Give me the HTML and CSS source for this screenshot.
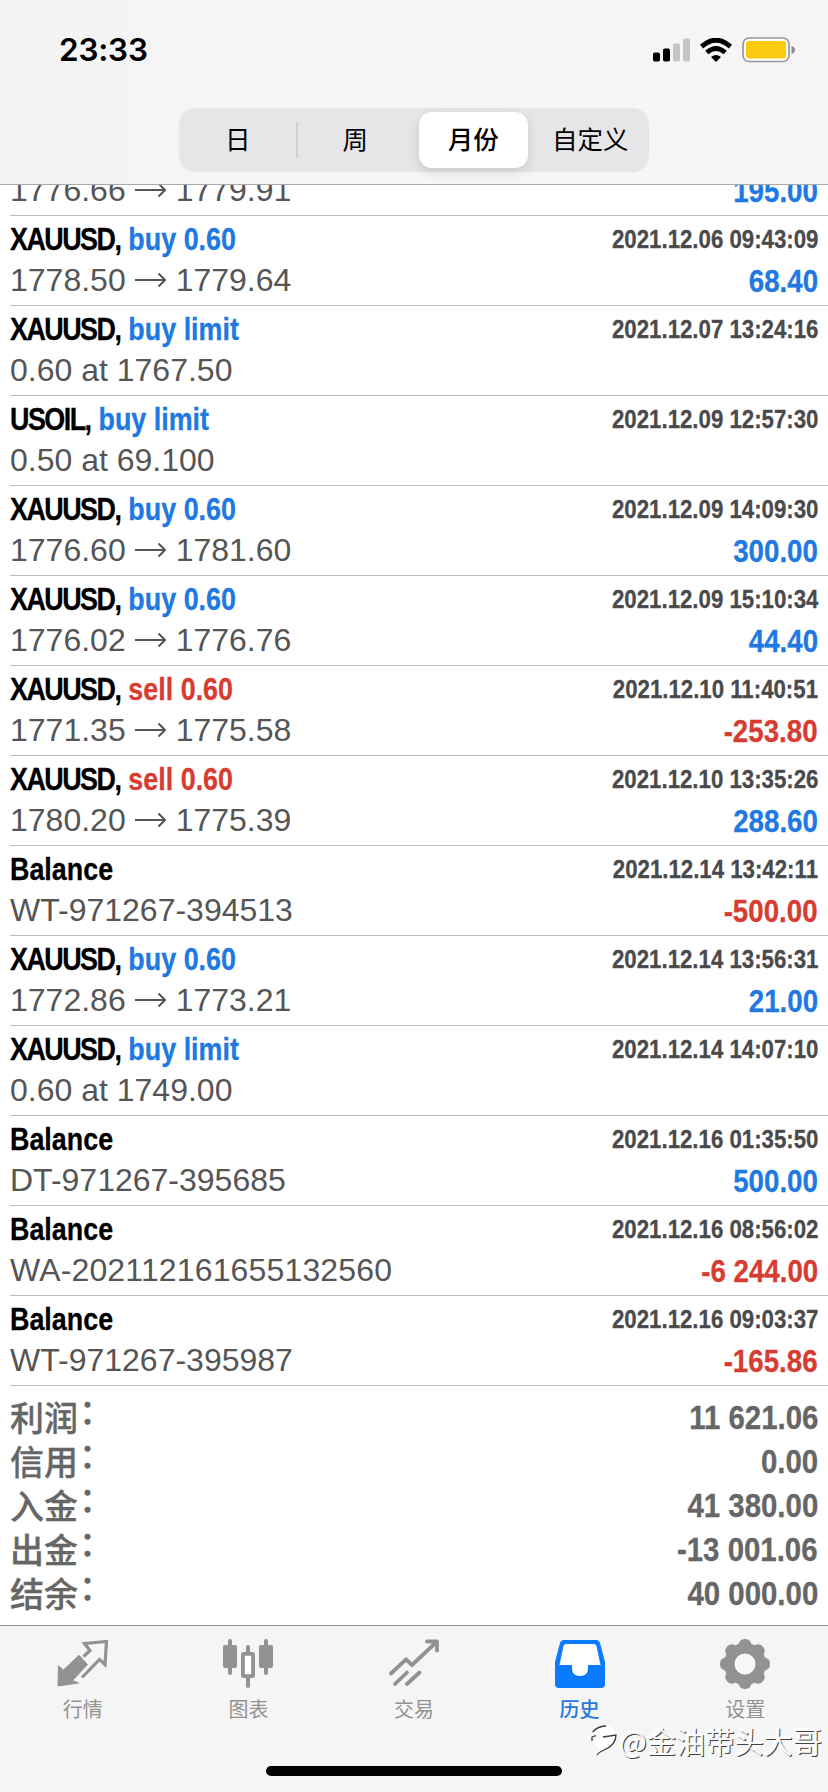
FILE: index.html
```html
<!DOCTYPE html>
<html lang="zh-CN">
<head>
<meta charset="utf-8">
<title>历史</title>
<link rel="stylesheet" href="styles.css">
</head>
<body>
<svg class="defs" width="0" height="0">
  <symbol id="arrow" viewBox="0 0 31 16"><path d="M0 8H30M23.500 1.500L30 8L23.500 14.500" fill="none" stroke="currentColor" stroke-width="2"/></symbol>
</svg>
<div class="screen">
  <header class="header">
    <div class="status">
      <span class="time">23:33</span>
      <div class="indicators">
        <svg class="signal" width="37" height="24" viewBox="0 0 37 24"><rect x="0" y="14.500" width="7" height="9" rx="1.800"/><rect x="10" y="10.500" width="7" height="13" rx="1.800"/><rect x="20" y="5.500" width="7" height="18" rx="1.800" fill="#c4c4c5"/><rect x="30" y="0.500" width="7" height="23" rx="1.800" fill="#c4c4c5"/></svg>
        <svg class="wifi" width="32" height="24" viewBox="0 0 32 24"><g fill="none" stroke="#000" stroke-width="4.800"><path d="M1.600 8.600Q16 -4.200 30.400 8.600"/><path d="M6.800 14.600Q16 6.200 25.200 14.600"/></g><path d="M11 19Q16 15 21 19L16 24Z"/></svg>
        <svg class="battery" width="53" height="26" viewBox="0 0 53 26"><rect x="1" y="1" width="46" height="23.500" rx="6" fill="#fffdf4" stroke="#98989b" stroke-width="1.700"/><rect x="4" y="4" width="40" height="17.500" rx="3" fill="#fbcb12"/><path d="M49.500 8.800Q53 10 53 13T49.500 17Z" fill="#8e8e93"/></svg>
      </div>
    </div>
    <div class="segments">
      <span class="segment">日</span>
      <span class="segment divided">周</span>
      <span class="segment selected">月份</span>
      <span class="segment">自定义</span>
    </div>
  </header>

  <main class="history">
    <div class="deal"><div class="line"></div><div class="line"><span>1776.66<svg class="arrow"><use href="#arrow"/></svg>1779.91</span><strong>195.00</strong></div></div>
    <div class="deal"><div class="line"><b><u>XAUUSD, </u><i>buy 0.60</i></b><time>2021.12.06 09:43:09</time></div><div class="line"><span>1778.50<svg class="arrow"><use href="#arrow"/></svg>1779.64</span><strong>68.40</strong></div></div>
    <div class="deal"><div class="line"><b><u>XAUUSD, </u><i>buy limit</i></b><time>2021.12.07 13:24:16</time></div><div class="line"><span>0.60 at 1767.50</span></div></div>
    <div class="deal"><div class="line"><b><u>USOIL, </u><i>buy limit</i></b><time>2021.12.09 12:57:30</time></div><div class="line"><span>0.50 at 69.100</span></div></div>
    <div class="deal"><div class="line"><b><u>XAUUSD, </u><i>buy 0.60</i></b><time>2021.12.09 14:09:30</time></div><div class="line"><span>1776.60<svg class="arrow"><use href="#arrow"/></svg>1781.60</span><strong>300.00</strong></div></div>
    <div class="deal"><div class="line"><b><u>XAUUSD, </u><i>buy 0.60</i></b><time>2021.12.09 15:10:34</time></div><div class="line"><span>1776.02<svg class="arrow"><use href="#arrow"/></svg>1776.76</span><strong>44.40</strong></div></div>
    <div class="deal"><div class="line"><b><u>XAUUSD, </u><i class="red">sell 0.60</i></b><time>2021.12.10 11:40:51</time></div><div class="line"><span>1771.35<svg class="arrow"><use href="#arrow"/></svg>1775.58</span><strong class="red">-253.80</strong></div></div>
    <div class="deal"><div class="line"><b><u>XAUUSD, </u><i class="red">sell 0.60</i></b><time>2021.12.10 13:35:26</time></div><div class="line"><span>1780.20<svg class="arrow"><use href="#arrow"/></svg>1775.39</span><strong>288.60</strong></div></div>
    <div class="deal"><div class="line"><b>Balance</b><time>2021.12.14 13:42:11</time></div><div class="line"><span>WT-971267-394513</span><strong class="red">-500.00</strong></div></div>
    <div class="deal"><div class="line"><b><u>XAUUSD, </u><i>buy 0.60</i></b><time>2021.12.14 13:56:31</time></div><div class="line"><span>1772.86<svg class="arrow"><use href="#arrow"/></svg>1773.21</span><strong>21.00</strong></div></div>
    <div class="deal"><div class="line"><b><u>XAUUSD, </u><i>buy limit</i></b><time>2021.12.14 14:07:10</time></div><div class="line"><span>0.60 at 1749.00</span></div></div>
    <div class="deal"><div class="line"><b>Balance</b><time>2021.12.16 01:35:50</time></div><div class="line"><span>DT-971267-395685</span><strong>500.00</strong></div></div>
    <div class="deal"><div class="line"><b>Balance</b><time>2021.12.16 08:56:02</time></div><div class="line"><span class="long">WA-202112161655132560</span><strong class="red">-6 244.00</strong></div></div>
    <div class="deal"><div class="line"><b>Balance</b><time>2021.12.16 09:03:37</time></div><div class="line"><span>WT-971267-395987</span><strong class="red">-165.86</strong></div></div>
    <dl class="summary">
      <div class="total"><dt>利润<span>：</span></dt><dd>11 621.06</dd></div>
      <div class="total"><dt>信用<span>：</span></dt><dd>0.00</dd></div>
      <div class="total"><dt>入金<span>：</span></dt><dd>41 380.00</dd></div>
      <div class="total"><dt>出金<span>：</span></dt><dd>-13 001.06</dd></div>
      <div class="total"><dt>结余<span>：</span></dt><dd>40 000.00</dd></div>
    </dl>
  </main>

  <footer class="footer">
    <nav class="tabs">
      <div class="tab">
        <svg width="52" height="52" viewBox="0 0 52 52"><path d="M1.500 29L6.500 33L22 18.200L30.500 27.500L15.500 43.500L21.500 46L1 49Z" fill="currentColor" stroke="currentColor" stroke-linejoin="round"/><path d="M26.500 19.500L33 13.500L27.500 6.500L49.500 4.500L48 27.500L42.500 22.500L25 40.500" fill="none" stroke="currentColor" stroke-width="3.200"/></svg>
        <span>行情</span>
      </div>
      <div class="tab">
        <svg width="52" height="52" viewBox="0 0 52 52"><g fill="currentColor"><rect x="1" y="8" width="14" height="23" rx="2"/><rect x="6" y="2" width="4" height="36" rx="2"/><rect x="37" y="8" width="14" height="23" rx="2"/><rect x="42" y="2" width="4" height="36" rx="2"/><rect x="24" y="8" width="4" height="9" rx="2"/><rect x="24" y="38" width="4" height="13" rx="2"/></g><rect x="20.900" y="16.900" width="10.200" height="22.200" rx="1" fill="#fff" stroke="currentColor" stroke-width="3.800"/></svg>
        <span>图表</span>
      </div>
      <div class="tab">
        <svg width="52" height="52" viewBox="0 0 52 52"><g fill="none" stroke="currentColor" stroke-width="3.800" stroke-linecap="round" stroke-linejoin="round"><path d="M3 36.500L18 22.300L24 28L48 5.500M39 4.500H49V13.500M7 47L19 35.500M19 47L31.500 35.500"/></g></svg>
        <span>交易</span>
      </div>
      <div class="tab active">
        <svg width="52" height="52" viewBox="0 0 52 52"><path d="M10 3H42Q45 3 46 6L51 25V47Q51 51 47 51H5Q1 51 1 47V25L6 6Q7 3 10 3Z" fill="currentColor"/><path d="M12 7H40Q42 7 42.500 9L46.500 28H34V31Q34 39 26 39T18 31V28H5.500L9.500 9Q10 7 12 7Z" fill="#fff"/></svg>
        <span>历史</span>
      </div>
      <div class="tab">
        <svg width="52" height="52" viewBox="0 0 52 52"><g fill="currentColor"><circle cx="26" cy="27" r="21"/><g id="teeth"><rect x="19.500" y="2" width="13" height="50" rx="6"/><rect x="1" y="20.500" width="50" height="13" rx="6"/></g><use href="#teeth" transform="rotate(45 26 27)"/></g><circle cx="26" cy="27" r="10.500" fill="#f8f8f8"/></svg>
        <span>设置</span>
      </div>
    </nav>
    <div class="home"></div>
    <div class="watermark">
      <svg width="30" height="34" viewBox="0 0 30 34"><path d="M4 9Q9 3 17 3Q25 3 27 11Q27 22 15 27Q10 29 8 32L11 25Q4 23 5 15Z" fill="#fff"/><path d="M3.700 9Q8 3.500 17 3M2.700 14L7 12.700M3 14V18M14 14L27 12Q27 22 15 27Q10 29 8 32" fill="none" stroke="#3a3a3a" stroke-width="1.300"/></svg>
      <span>@金油带头大哥</span>
    </div>
  </footer>
</div>
</body>
</html>
```
FILE: styles.css
```css
* { box-sizing: border-box; }

body {
  margin: 0;
  background: #fff;
  font-family: "Liberation Sans", "Noto Sans CJK SC", sans-serif;
}

.defs { display: block; }

.screen {
  display: flex;
  flex-direction: column;
  width: 828px;
  height: 1792px;
  overflow: hidden;
}

.header {
  flex: none;
  height: 185px;
  border-bottom: 1px solid #a9a9ac;
  background: linear-gradient(90deg, #f3f3f4, #f6f5f7 40%, #f5f5f7);
}

.status {
  display: flex;
  justify-content: space-between;
  align-items: center;
  height: 108px;
  padding: 0 33px 8px 59px;
}

.time {
  font: 600 31.5px/40px Inter, sans-serif;
  letter-spacing: -0.2px;
}

.indicators { display: flex; align-items: center; }
.wifi { margin-left: 10px; }
.battery { margin-left: 10px; }

.segments {
  display: grid;
  grid-template-columns: repeat(4, 1fr);
  width: 470px;
  height: 64px;
  margin-left: 179px;
  border-radius: 16px;
  background: #e6e6e8;
}

.segment {
  position: relative;
  display: flex;
  align-items: center;
  justify-content: center;
  padding-bottom: 4px;
  font: 400 25.5px/38px "Noto Sans CJK SC", sans-serif;
}

.divided::before {
  content: "";
  position: absolute;
  left: -1px;
  top: 14px;
  width: 2px;
  height: 36px;
  background: #d0d0d3;
}

.selected {
  margin: 4px 4px 4px 5px;
  border-radius: 13px;
  background: #fff;
  box-shadow: 0 4px 12px rgba(0, 0, 0, 0.13);
  font-weight: 500;
}

.history {
  display: flex;
  flex: 1;
  flex-direction: column;
  justify-content: flex-end;
  min-height: 0;
  overflow: hidden;
}

.deal {
  flex: none;
  height: 90px;
  margin-left: 10px;
  padding: 3px 10px 0 0;
  border-bottom: 1px solid #bdbdbd;
}

.line {
  display: flex;
  justify-content: space-between;
  align-items: center;
  height: 41px;
  line-height: 41px;
  font-size: 32px;
  color: #555;
  white-space: nowrap;
}

.long { letter-spacing: 0.15px; }

/* Condensed bold face, made by narrowing the regular-width bold. */
.line b,
.line time,
.line strong,
.total dd {
  font-weight: 700;
  transform: scaleX(0.865);
  transform-origin: 100% 50%;
  -webkit-text-stroke: 0.3px currentColor;
}

.line b {
  white-space: pre;
  color: #000;
  transform: scaleX(0.84);
  transform-origin: 0 50%;
}

.line u { text-decoration: none; letter-spacing: -1.8px; word-spacing: 2.4px; }
.line i { font-style: normal; color: #2079e2; }
.line time { font-size: 26px; color: #4a4a4c; transform: scaleX(0.855); }
.line strong { padding-top: 1px; color: #2079e2; }
.line .red { color: #d63c31; }

.arrow {
  width: 31px;
  height: 16px;
  margin: 0 10px 0 9px;
  vertical-align: 3px;
}

.summary {
  flex: none;
  height: 239px;
  margin: 0;
  padding: 9px 10px 0;
}

.total {
  display: flex;
  justify-content: space-between;
  height: 44px;
  line-height: 45px;
  font-size: 34px;
  color: #666;
}

.total dt {
  font-family: "Noto Sans CJK SC", sans-serif;
  font-weight: 500;
  line-height: 43px;
  -webkit-text-stroke: 0.3px #666;
}

.total dt span { margin-left: 1px; line-height: 0; vertical-align: 7px; }
.total dd { margin: 0; }

.footer {
  position: relative;
  flex: none;
  height: 167px;
  border-top: 1px solid #8f918f;
  background: #f5f5f5;
}

.tabs { display: flex; padding-top: 11px; }

.tab {
  display: flex;
  flex: 1;
  flex-direction: column;
  align-items: center;
  color: #929292;
}

.tab span {
  margin-top: 5px;
  font: 400 20px/30px "Noto Sans CJK SC", sans-serif;
}

.active { color: #0a7aff; }
.active span { font-weight: 500; color: #2878dc; }

.home {
  width: 296px;
  height: 10px;
  margin: 42px 0 0 266px;
  border-radius: 5px;
  background: #000;
}

.watermark {
  position: absolute;
  top: 94px;
  right: 6px;
  display: flex;
  align-items: center;
  font: 400 29.2px/40px "Noto Sans CJK SC", sans-serif;
  color: #fafafa;
  text-shadow: 1px 1px 0 #444, -1px -1px 0 #fff;
}
```
